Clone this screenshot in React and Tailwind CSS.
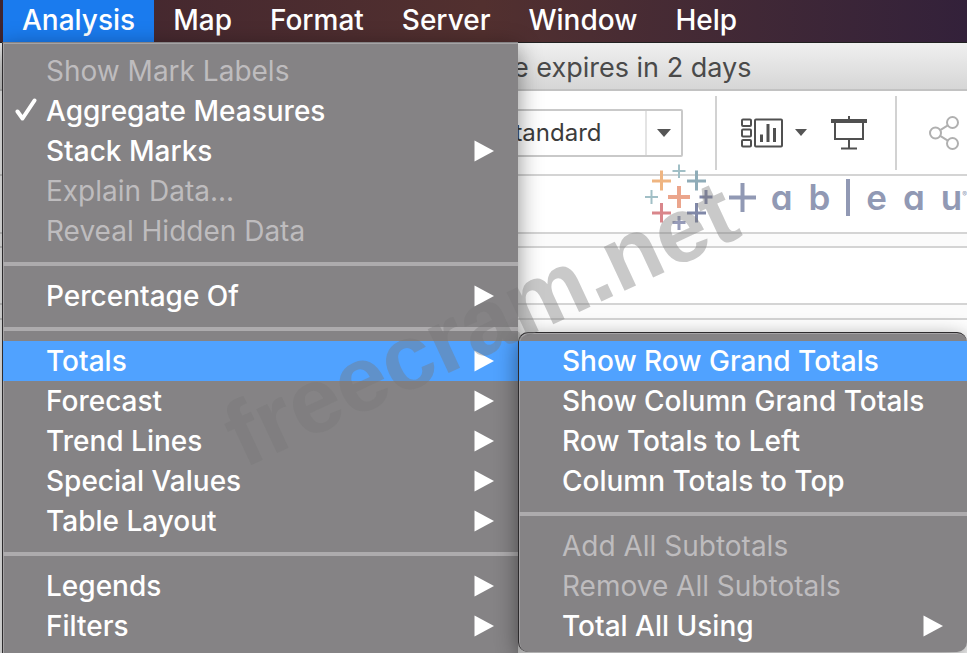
import React from 'react';
import clsx from 'clsx';

const menuBar = ['Analysis', 'Map', 'Format', 'Server', 'Window', 'Help'];

const totalsMenu = [
  { label: 'Show Row Grand Totals', active: true },
  { label: 'Show Column Grand Totals' },
  { label: 'Row Totals to Left' },
  { label: 'Column Totals to Top' },
  { separator: true },
  { label: 'Add All Subtotals', disabled: true },
  { label: 'Remove All Subtotals', disabled: true },
  { label: 'Total All Using', hasMore: true }
];

const analysisMenu = [
  { label: 'Show Mark Labels', disabled: true },
  { label: 'Aggregate Measures', checked: true },
  { label: 'Stack Marks', hasMore: true },
  { label: 'Explain Data...', disabled: true },
  { label: 'Reveal Hidden Data', disabled: true },
  { separator: true },
  { label: 'Percentage Of', hasMore: true },
  { separator: true },
  { label: 'Totals', hasMore: true, active: true, submenu: totalsMenu },
  { label: 'Forecast', hasMore: true },
  { label: 'Trend Lines', hasMore: true },
  { label: 'Special Values', hasMore: true },
  { label: 'Table Layout', hasMore: true },
  { separator: true },
  { label: 'Legends', hasMore: true },
  { label: 'Filters', hasMore: true }
];

function CheckMark() {
  return (
    <svg viewBox="0 0 24 26" className="w-6 h-[26px] absolute left-2.5 top-1.5" fill="none" stroke="white" strokeWidth="4" strokeLinecap="round" strokeLinejoin="round" aria-hidden="true">
      <path d="M4.500 14.500 L9.500 21.500 L21.500 3.500" />
    </svg>
  );
}

function MenuItem({ item }) {
  if (item.separator) {
    return (
      <li role="separator" className="h-[25px] pt-[11px]">
        <div className="h-1 bg-[#adabad]" />
      </li>
    );
  }

  return (
    <li className="relative">
      <button
        type="button"
        disabled={item.disabled}
        className={clsx(
          'relative w-full h-10 pl-[43px] pr-6 flex items-center justify-between text-left whitespace-nowrap',
          item.disabled ? 'text-[#bebcbe] font-normal' : 'text-white font-medium',
          item.active && 'bg-[#50a2ff]'
        )}
      >
        {item.checked && <CheckMark />}
        <span>{item.label}</span>
        {item.hasMore && (
          <svg viewBox="0 0 20 22" className="w-5 h-[22px]" fill="white" aria-hidden="true">
            <path d="M0.500 0.500 L20 11 L0.500 21.500 Z" />
          </svg>
        )}
      </button>
      {item.submenu && (
        <Menu items={item.submenu} className="absolute left-full -top-[9px] w-[449px] pb-1.5 rounded-[10px] border-t-[#2d2b2d]" />
      )}
    </li>
  );
}

function Menu({ items, className }) {
  return (
    <ul className={clsx('pt-2 bg-[#858385] border-l border-t border-l-[#2d2b2d] shadow-[inset_1px_1px_0_#a5a3a5,0_6px_22px_rgba(0,0,0,0.45)]', className)}>
      {items.map((item, i) => (
        <MenuItem key={item.label || i} item={item} />
      ))}
    </ul>
  );
}

function Toolbar() {
  return (
    <div className="h-[85px] flex items-center justify-end border-b-2 border-[#d4d4d4]">
      <label className="relative flex items-center w-[200px] h-12 border-2 border-[#c9c9c9] rounded-xs">
        <span className="sr-only">Fit</span>
        <select className="appearance-none w-full h-full pl-3.5 bg-transparent text-[24px] text-[#3c3c3c] outline-none">
          <option>Standard</option>
        </select>
        <span className="absolute right-0 w-9 h-full border-l-2 border-[#e4e4e4] flex items-center justify-center pointer-events-none">
          <svg viewBox="0 0 14 8" className="w-3.5 h-2" fill="#555555" aria-hidden="true">
            <path d="M0 0 H14 L7 8 Z" />
          </svg>
        </span>
      </label>

      <div className="ml-8 w-0.5 h-[74px] bg-[#d2d2d2]" />

      <button type="button" aria-label="Show/Hide Cards" className="ml-6 flex items-center gap-3">
        <svg viewBox="0 0 42 30" className="w-[42px] h-[30px]" fill="none" stroke="#505050" strokeWidth="2" aria-hidden="true">
          <rect x="1" y="1.500" width="9" height="6.500" rx="1" />
          <rect x="1" y="11.500" width="9" height="7" rx="1" />
          <rect x="1" y="22" width="9" height="6.500" rx="1" />
          <rect x="14" y="1.500" width="27" height="27" rx="1" />
          <path d="M20.500 16.500 V24 M27 6 V24 M33.500 10 V24" strokeWidth="3" />
        </svg>
        <svg viewBox="0 0 12 7" className="w-3 h-[7px]" fill="#555555" aria-hidden="true">
          <path d="M0 0 H12 L6 7 Z" />
        </svg>
      </button>

      <button type="button" aria-label="Presentation Mode" className="ml-6">
        <svg viewBox="0 0 36 34" className="w-9 h-[34px]" fill="none" stroke="#505050" strokeWidth="2" aria-hidden="true">
          <path d="M18 0 V4" />
          <path d="M0 5 H36" strokeWidth="4" />
          <path d="M4 6 V23 H32 V6" />
          <path d="M18 23 V32 M10 32.500 H26" />
        </svg>
      </button>

      <div className="ml-7 w-0.5 h-[74px] bg-[#d2d2d2]" />

      <button type="button" aria-label="Share" className="ml-8 mr-2">
        <svg viewBox="0 0 30 34" className="w-[30px] h-[34px]" fill="none" stroke="#b0b0b0" strokeWidth="2" aria-hidden="true">
          <circle cx="6.500" cy="17" r="5.500" />
          <circle cx="23.500" cy="6.500" r="5.500" />
          <circle cx="23.500" cy="27.500" r="5.500" />
          <path d="M11.200 14.100 L18.800 9.400 M11.200 19.900 L18.800 24.600" />
        </svg>
      </button>
    </div>
  );
}

function TableauLogo() {
  return (
    <div className="absolute top-[164px] right-0 flex items-center h-[66px] text-[#9199b4]" aria-label="tableau">
      <svg viewBox="0 0 112 66" className="w-28 h-[66px] mr-3.5" fill="none" aria-hidden="true">
        <path d="M34 22 V44 M23 33 H45" stroke="#eba58c" strokeWidth="4" />
        <path d="M16.500 6.500 V26.500 M7 17 H26" stroke="#efb581" strokeWidth="3" />
        <path d="M51.500 6.500 V26.500 M42 17 H61" stroke="#8facb8" strokeWidth="3" />
        <path d="M16.500 39 V58.500 M7 49 H26" stroke="#d9868b" strokeWidth="3" />
        <path d="M51.500 39 V58.500 M42 49 H61" stroke="#8088a8" strokeWidth="3" />
        <path d="M34 0.500 V14 M27.500 7 H40.500" stroke="#a1bfc6" strokeWidth="2" />
        <path d="M6.500 26 V40 M0 33 H13" stroke="#a1bfc6" strokeWidth="2" />
        <path d="M61 26 V40 M54.500 33 H67.500" stroke="#8086a8" strokeWidth="3" />
        <path d="M34 52 V66 M27.500 58.500 H40.500" stroke="#969bb9" strokeWidth="3" />
        <path d="M97.500 19 V48 M84 33.500 H111" stroke="currentColor" strokeWidth="4" />
      </svg>
      <span className="flex items-center gap-4 text-[35px] leading-[66px] font-semibold [font-feature-settings:'cv11']">
        <span>a</span>
        <span>b</span>
        <span className="w-1 h-[37px] bg-current" />
        <span>e</span>
        <span>a</span>
        <span>u</span>
      </span>
      <span className="text-[7px] mb-1">®</span>
    </div>
  );
}

export default function App() {
  return (
    <div className="relative min-h-screen overflow-hidden bg-white font-['Inter','Liberation_Sans',sans-serif] text-[28px]">
      <nav className="h-[42px] pl-[3px] flex bg-linear-to-r from-[#40252f] via-[#52302f] to-[#33213a] text-white font-medium">
        {menuBar.map((label, i) => (
          <button key={label} type="button" className={clsx('px-[19px] pb-0.5 flex items-center', i === 0 && 'bg-[#1a7bee]')}>
            {label}
          </button>
        ))}
      </nav>

      <main>
        <div className="h-[49px] pl-[513px] pt-1 flex items-center bg-linear-to-b from-[#f0f0f0] to-[#d6d6d6] border-b-2 border-[#c2c2c2] text-[27px] text-[#4a4a4a] border-t border-t-[#222222]">
          e expires in 2 days
        </div>
        <Toolbar />
        <div className="h-[58px] border-b-2 border-[#d4d4d4]" />
        <div className="h-3.5 bg-[#fbfbfb] border-b-2 border-[#d4d4d4]" />
        <div className="h-[57px] border-b-2 border-[#d4d4d4]" />
        <div className="h-[15px] bg-[#fbfbfb] border-b-2 border-[#d4d4d4]" />
      </main>

      <TableauLogo />

      <Menu items={analysisMenu} className="absolute left-0.5 top-[42px] w-[516px] pb-10 border-t-[#858385]" />

      <div className="absolute left-[204px] top-[277px] w-[552px] text-center font-['Liberation_Sans',sans-serif] font-bold text-[92px] leading-[92px] text-[#787878]/40 -rotate-25 pointer-events-none">
        freecram.net
      </div>
    </div>
  );
}
